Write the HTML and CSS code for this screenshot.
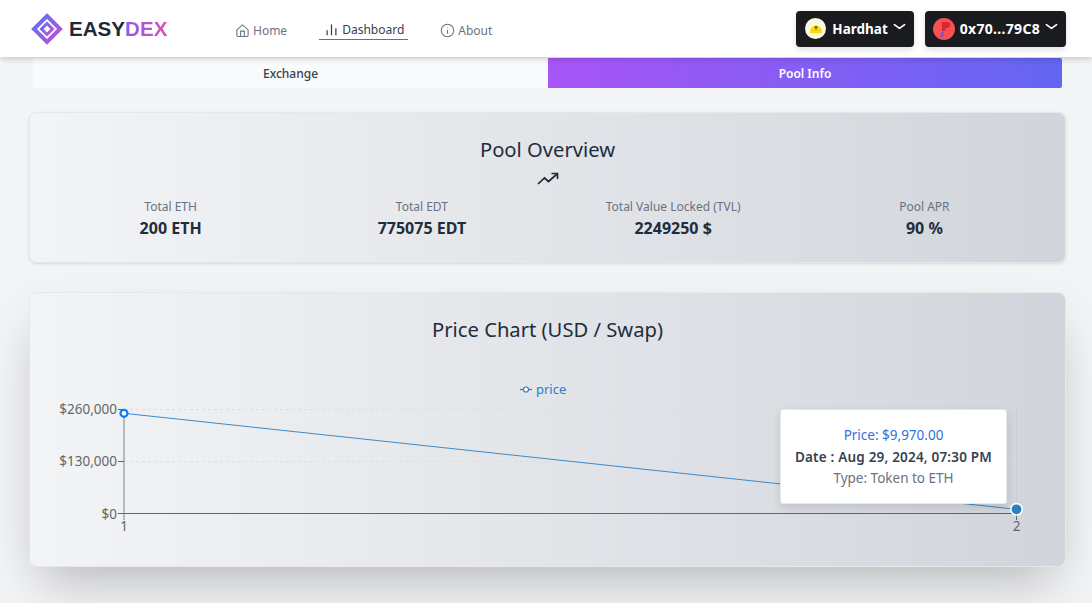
FILE: index.html
```html
<!DOCTYPE html>
<html lang="en">
<head>
    <meta charset="UTF-8">
    <meta name="viewport" content="width=device-width, initial-scale=1.0">
    <title>EasyDex</title>
    <link rel="stylesheet" href="styles.css">
</head>
<body>
    <nav class="topbar">
        <a class="logo" href="#">
            <svg width="32" height="32" viewBox="0 0 32 32" fill="none">
                <defs>
                    <linearGradient id="logo-grad" x1="0" y1="0" x2="1" y2="1">
                        <stop offset="0" stop-color="#5b72f5"/>
                        <stop offset="1" stop-color="#c04fd6"/>
                    </linearGradient>
                </defs>
                <path d="M16 3 L29 16 L16 29 L3 16 Z" stroke="url(#logo-grad)" stroke-width="4"/>
                <path d="M16 10.5 L21.5 16 L16 21.5 L10.5 16 Z" stroke="url(#logo-grad)" stroke-width="3"/>
            </svg>
            <span class="logo-text">EASY<span class="logo-accent">DEX</span></span>
        </a>
        <ul class="nav-links">
            <li class="nav-item">
                <svg width="15" height="15" viewBox="0 0 24 24" fill="none" stroke="currentColor" stroke-width="1.7"><path d="M3 11 L12 3 L21 11 V20 a1.5 1.5 0 0 1 -1.5 1.5 H4.5 A1.5 1.5 0 0 1 3 20 Z"/><path d="M9 21.5 V13 H15 V21.5"/></svg>
                Home
            </li>
            <li class="nav-item active">
                <svg width="15" height="15" viewBox="0 0 24 24" fill="none" stroke="currentColor" stroke-width="2"><path d="M5 21 V13 M12 21 V4 M19 21 V10"/></svg>
                Dashboard
            </li>
            <li class="nav-item">
                <svg width="15" height="15" viewBox="0 0 24 24" fill="none" stroke="currentColor" stroke-width="1.7"><circle cx="12" cy="12" r="10"/><path d="M12 11 V17 M12 7 V8.5"/></svg>
                About
            </li>
        </ul>
        <div class="wallet">
            <button class="wallet-btn">
                <span class="chain-icon">
                    <svg width="14" height="11" viewBox="0 0 14 11"><path d="M1 9 a6 6.5 0 0 1 12 0 v1 h-12 Z" fill="#f5dc10"/><path d="M7 3 V7 M5.5 5 L7 3 L8.5 5" stroke="#5a5200" stroke-width="1" fill="none"/></svg>
                </span>
                <span class="chain-name">Hardhat</span>
                <svg class="chevron" width="13" height="8" viewBox="0 0 14 8"><path d="M1.5 1.5 L7 5.5 L12.5 1.5" stroke="#fff" stroke-width="1.8" fill="none" stroke-linecap="round" stroke-linejoin="round"/></svg>
            </button>
            <button class="wallet-btn">
                <span class="avatar">
                    <svg width="14" height="16" viewBox="0 0 14 16"><path d="M5 1 h5 a3 3 0 0 1 0 6 h-1 l-1 3 h-3 Z" fill="#d8243a"/><path d="M6 11 L5 15 L3 15" stroke="#6a4be0" stroke-width="1.4" fill="none"/></svg>
                </span>
                <span class="address">0x70...79C8</span>
                <svg class="chevron" width="13" height="8" viewBox="0 0 14 8"><path d="M1.5 1.5 L7 5.5 L12.5 1.5" stroke="#fff" stroke-width="1.8" fill="none" stroke-linecap="round" stroke-linejoin="round"/></svg>
            </button>
        </div>
    </nav>

    <div class="tabs">
        <div class="tab">Exchange</div>
        <div class="tab selected">Pool Info</div>
    </div>

    <section class="card overview">
        <h2 class="card-title">Pool Overview</h2>
        <svg class="trend" width="22" height="14" viewBox="0 0 22 14" fill="none" stroke="#1f2937" stroke-width="1.7"><path d="M1 12 L7.5 6 L11.5 9.5 L20 2"/><path d="M14.5 1.5 H20.5 V7"/></svg>
        <div class="stats">
            <div class="stat"><div class="stat-label">Total ETH</div><div class="stat-value">200 ETH</div></div>
            <div class="stat"><div class="stat-label">Total EDT</div><div class="stat-value">775075 EDT</div></div>
            <div class="stat"><div class="stat-label">Total Value Locked (TVL)</div><div class="stat-value">2249250 $</div></div>
            <div class="stat"><div class="stat-label">Pool APR</div><div class="stat-value">90 %</div></div>
        </div>
    </section>

    <section class="card chart-card">
        <h2 class="card-title">Price Chart (USD / Swap)</h2>
        <div class="chart">
            <svg class="chart-svg" width="1035" height="170" viewBox="0 0 1035 170">
                <!-- legend -->
                <path d="M490 19.5 H502" stroke="#2b7fc3" stroke-width="1.2"/>
                <circle cx="496" cy="19.5" r="2.5" fill="#fff" stroke="#2b7fc3" stroke-width="1.2"/>
                <text class="legend-text" x="506" y="24">price</text>

                <!-- grid -->
                <path d="M94 39.5 H987 M94 91.5 H987" stroke="#dcdee3" stroke-dasharray="3 3"/>
                <path d="M986.5 39 V143" stroke="#c9ccd2"/>

                <!-- axes -->
                <path d="M94 39 V150" stroke="#a9abaf" stroke-width="1.6"/>
                <path d="M94 143.5 H987" stroke="#666"/>
                <path d="M88 39.5 H94 M88 91.5 H94 M88 143.5 H94 M986.5 143 V150" stroke="#666"/>
                <text class="axis-text" x="87" y="44" text-anchor="end">$260,000</text>
                <text class="axis-text" x="87" y="96" text-anchor="end">$130,000</text>
                <text class="axis-text" x="87" y="149" text-anchor="end">$0</text>
                <text class="axis-text" x="94" y="161" text-anchor="middle">1</text>
                <text class="axis-text" x="986.5" y="161" text-anchor="middle">2</text>

                <!-- line -->
                <path d="M94 43.3 L986.5 139.3" stroke="#3b8bc9"/>
                <circle cx="94" cy="43.3" r="3.5" fill="#fff" stroke="#0a7bf2" stroke-width="2.2"/>
                <circle cx="986.5" cy="139.3" r="5.7" fill="#2b7fc3" stroke="#fff" stroke-width="1.6"/>
            </svg>
            <div class="tooltip">
                <div class="tip-price">Price: $9,970.00</div>
                <div class="tip-date">Date : Aug 29, 2024, 07:30 PM</div>
                <div class="tip-type">Type: Token to ETH</div>
            </div>
        </div>
    </section>
</body>
</html>
```

FILE: styles.css
```css
* {
    margin: 0;
    padding: 0;
    box-sizing: border-box;
    font-family: 'Noto Sans', sans-serif;
}

body {
    background: #f3f4f6;
    color: #1f2937;
    height: 603px;
    overflow: hidden;
}

/* Top bar */
.topbar {
    height: 57px;
    background: #fff;
    box-shadow: 0 2px 6px rgba(0, 0, 0, 0.18);
    display: flex;
    align-items: center;
    padding: 0 26px 0 31px;
    position: relative;
}

.logo {
    display: flex;
    align-items: center;
    gap: 6px;
    text-decoration: none;
    width: 204px;
}

.logo-text {
    font-family: 'Liberation Sans', sans-serif;
    font-size: 20.6px;
    font-weight: 700;
    color: #1f2937;
}

.logo-accent {
    font-family: inherit;
    background: linear-gradient(to right, #8b5cf6, #db4fb0);
    -webkit-background-clip: text;
    background-clip: text;
    color: transparent;
}

.nav-links {
    list-style: none;
    display: flex;
    align-items: center;
    gap: 32px;
    margin-top: 3px;
}

.nav-item {
    display: flex;
    align-items: center;
    gap: 3px;
    font-size: 12px;
    color: #6b7280;
    height: 20px;
}

.nav-item.active {
    color: #374151;
    border-bottom: 1px solid #3b73d9;
    padding: 0 4px 0 5px;
    height: 20px;
}

.wallet {
    display: flex;
    gap: 11px;
    margin-left: auto;
}

.wallet-btn {
    display: flex;
    align-items: center;
    height: 36px;
    padding: 0 8px;
    gap: 5px;
    background: #1a1b1f;
    color: #fff;
    border: none;
    border-radius: 4px;
    font-size: 14px;
    font-weight: 700;
    box-shadow: 0 3px 6px rgba(0, 0, 0, 0.12);
}

.chain-name {
    font-size: 13.5px;
}

.address {
    letter-spacing: 0.3px;
}

.chevron {
    margin-bottom: 3px;
}

.chain-icon,
.avatar {
    height: 21px;
    border-radius: 50%;
    display: flex;
    align-items: center;
    justify-content: center;
}

.chain-icon {
    width: 21px;
    margin: 0 1px;
    background: #fbf9df;
}

.avatar {
    width: 22px;
    height: 22px;
    background: #f6504f;
}

/* Tabs */
.tabs {
    display: grid;
    grid-template-columns: 515px 514px;
    margin: 1px 0 0 33px;
    height: 30px;
}

.tab {
    display: flex;
    align-items: center;
    justify-content: center;
    background: #f9fafb;
    font-size: 12px;
    font-weight: 500;
    color: #374151;
}

.tab.selected {
    background: linear-gradient(to right, #a855f7, #6366f1);
    color: #fff;
    font-weight: 600;
    border-radius: 0 2px 2px 0;
}

/* Cards */
.card {
    width: 1037px;
    margin-left: 29px;
    border: 1px solid #e5e7eb;
    border-radius: 8px;
    background: linear-gradient(to right, #f3f4f6, #d1d5db);
    text-align: center;
}

.card-title {
    font-size: 20.2px;
    font-weight: 400;
    line-height: 30px;
    color: #1f2d3d;
}

.overview {
    margin-top: 24px;
    height: 151px;
    padding-top: 21px;
    box-shadow: 0 1px 3px rgba(0, 0, 0, 0.12);
}

.trend {
    display: block;
    margin: 8px auto 0;
}

.stats {
    display: grid;
    grid-template-columns: repeat(4, 1fr);
    padding: 0 15px;
    margin-top: 12px;
}

.stat-label {
    font-size: 12px;
    color: #6b7280;
    line-height: 18px;
}

.stat-value {
    font-size: 16px;
    font-weight: 700;
    color: #1f2d3d;
    line-height: 25px;
}

.chart-card {
    margin-top: 29px;
    height: 275px;
    padding-top: 21px;
    box-shadow: 0 25px 50px -12px rgba(0, 0, 0, 0.25);
}

.chart {
    position: relative;
    margin-top: 26px;
}

.chart-svg {
    display: block;
}

.legend-text {
    font-size: 13px;
    fill: #2b7fc3;
}

.axis-text {
    font-size: 13.5px;
    fill: #666;
}

.tooltip {
    position: absolute;
    left: 750px;
    top: 39px;
    width: 227px;
    height: 95px;
    background: #fff;
    border: 1px solid #e5e7eb;
    border-radius: 3px;
    box-shadow: 0 4px 10px rgba(0, 0, 0, 0.12);
    font-size: 13.5px;
    line-height: 21.5px;
    padding-top: 15px;
}

.tip-price {
    color: #2f6fe0;
}

.tip-date {
    font-weight: 600;
    letter-spacing: 0.2px;
    color: #374151;
}

.tip-type {
    color: #6b7280;
}
```
